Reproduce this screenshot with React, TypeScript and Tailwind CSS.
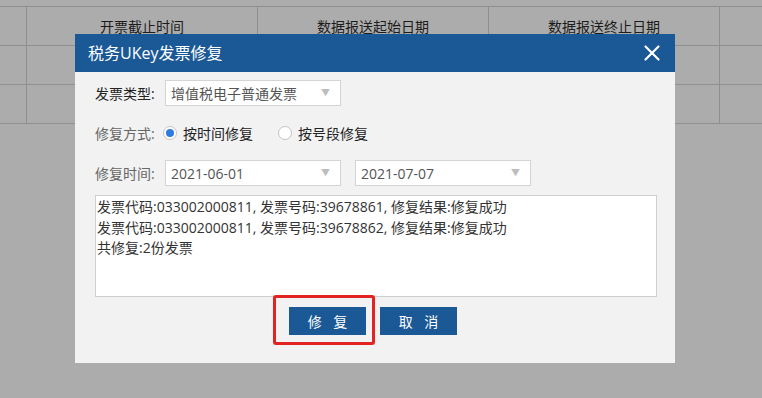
import { X } from 'lucide-react'

const cols = ['', '开票截止时间', '数据报送起始日期', '数据报送终止日期', '']

function Select({ value }: { value: string }) {
  return (
    <div className="flex h-[26px] w-[176px] items-center justify-between border border-[#d4d4d4] bg-white pl-[5px] pr-[10px] text-[14px] text-[#555]">
      <span>{value}</span>
      <span className="text-[9px] text-[#bdbdbd]">▼</span>
    </div>
  )
}

function Radio({ checked, label }: { checked?: boolean; label: string }) {
  return (
    <label className="flex items-center gap-[6px] text-[14px] text-[#222]">
      <span className="flex h-[14px] w-[14px] items-center justify-center rounded-full border border-[#c4c4c4] bg-white">
        {checked && <span className="h-[8px] w-[8px] rounded-full bg-[#2f7ae0]" />}
      </span>
      {label}
    </label>
  )
}

export default function App() {
  return (
    <div
      className="relative h-[398px] w-[762px] overflow-hidden bg-[#acacac]"
      style={{ fontFamily: '"Open Sans", "Noto Sans CJK SC", sans-serif' }}
    >
      {/* Table behind the overlay */}
      <div className="pt-[6px]">
        <div className="border-t border-[#8f8f8f]">
          {[0, 1, 2].map((r) => (
            <div key={r} className="flex h-[39px] border-b border-[#8f8f8f]">
              {cols.map((c, i) => (
                <div
                  key={i}
                  className={`flex items-center justify-center text-[14px] text-[#1c1c1c] ${
                    i === 0 ? 'w-[27px] border-r border-[#8f8f8f]' : i === 4 ? 'flex-1' : 'w-[231px] border-r border-[#8f8f8f]'
                  }`}
                >
                  {r === 0 ? c : ''}
                </div>
              ))}
            </div>
          ))}
        </div>
      </div>

      {/* Dialog */}
      <div className="absolute left-[75px] top-[34px] flex h-[329px] w-[600px] flex-col bg-[#f2f2f2]">
        <div className="flex h-[38px] items-center justify-between bg-[#1a5896] pl-[13px] pr-[10px]">
          <span className="text-[16px] text-white">税务UKey发票修复</span>
          <X className="h-[26px] w-[26px] text-white" strokeWidth={2} />
        </div>

        <div className="flex flex-col pl-[20px] pt-[8px]">
          <div className="flex items-center">
            <span className="w-[70px] text-[14px] text-[#222]">发票类型:</span>
            <Select value="增值税电子普通发票" />
          </div>

          <div className="mt-[14px] flex h-[26px] items-center">
            <span className="w-[68px] text-[14px] text-[#666]">修复方式:</span>
            <div className="flex items-center gap-[25px]">
              <Radio checked label="按时间修复" />
              <Radio label="按号段修复" />
            </div>
          </div>

          <div className="mt-[14px] flex items-center">
            <span className="w-[70px] text-[14px] text-[#666]">修复时间:</span>
            <Select value="2021-06-01" />
            <div className="ml-[14px]">
              <Select value="2021-07-07" />
            </div>
          </div>

          <div className="mt-[9px] h-[102px] w-[562px] border border-[#cfcfcf] bg-white px-[1px] pt-[1px] text-[14px] leading-[20.5px] text-[#333]">
            <div>发票代码:033002000811, 发票号码:39678861, 修复结果:修复成功</div>
            <div>发票代码:033002000811, 发票号码:39678862, 修复结果:修复成功</div>
            <div>共修复:2份发票</div>
          </div>

          <div className="mt-[10px] flex gap-[14px] pl-[194px]">
            <div className="relative">
              <button className="h-[28px] w-[77px] bg-[#1a5896] pl-[4px] text-[14px] tracking-[4px] text-white">修 复</button>
              <div className="absolute -bottom-[10px] -left-[16px] -right-[9px] -top-[12px] rounded-[3px] border-[3px] border-[#e32222]" />
            </div>
            <button className="h-[28px] w-[77px] bg-[#1a5896] pl-[4px] text-[14px] tracking-[4px] text-white">取 消</button>
          </div>
        </div>
      </div>
    </div>
  )
}
